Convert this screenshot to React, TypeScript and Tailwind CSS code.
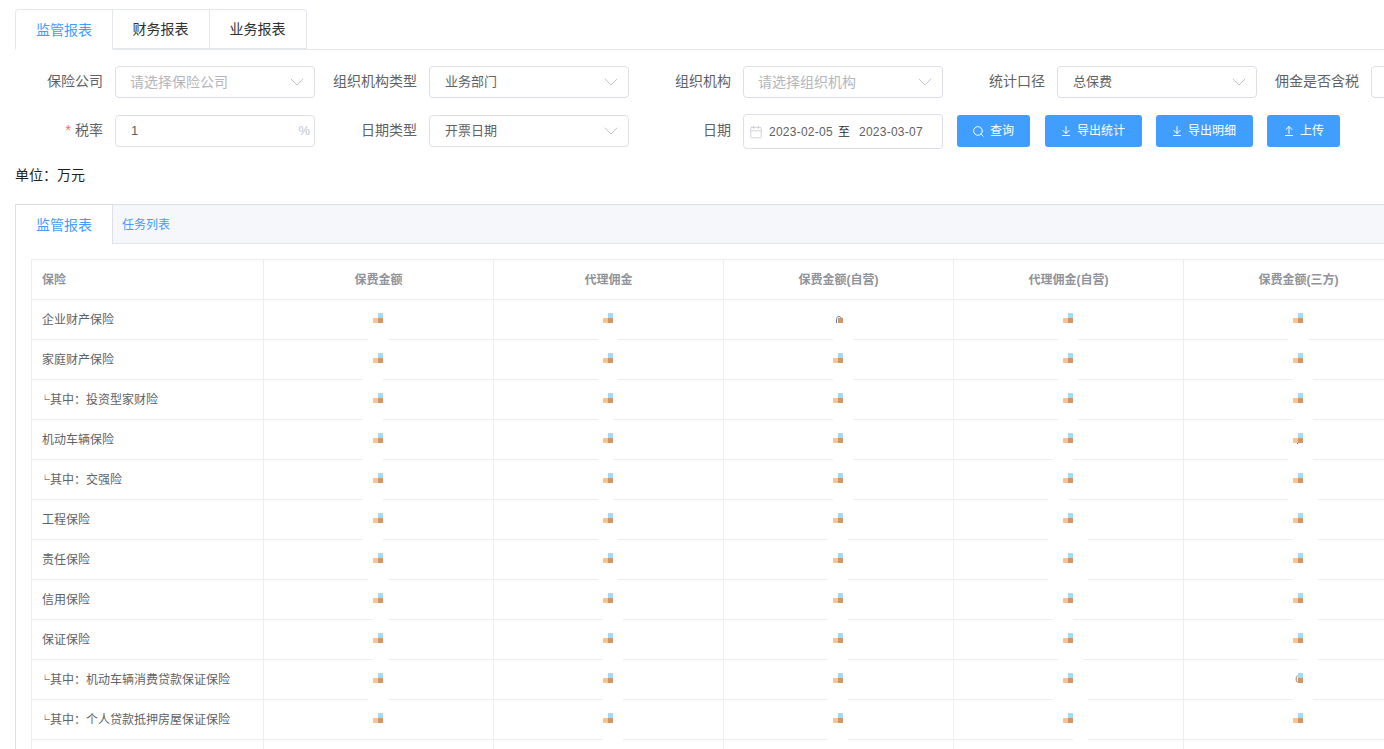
import { ArrowDownToLine, ArrowUpFromLine, Calendar, ChevronDown, Search } from "lucide-react";
import type { ReactNode } from "react";

const columns = ["保费金额", "代理佣金", "保费金额(自营)", "代理佣金(自营)", "保费金额(三方)"];

const rows = [
  "企业财产保险",
  "家庭财产保险",
  "└其中：投资型家财险",
  "机动车辆保险",
  "└其中：交强险",
  "工程保险",
  "责任保险",
  "信用保险",
  "保证保险",
  "└其中：机动车辆消费贷款保证保险",
  "└其中：个人贷款抵押房屋保证保险",
  "",
];

// where the values wipe out the row line, per column: [from, to] relative to the blob
const gaps: ([number, number] | null)[][] = [
  [[-5, 15], [-10, 10], [-10, 10], [-10, 10], [-10, 10], [-10, 10], [-5, 15], [0, 15], [0, 15], [-5, 15], null],
  [[-5, 15], [-5, 15], [-5, 10], [-5, 10], [-5, 10], [-5, 15], [-5, 15], [0, 20], [0, 20], [0, 20], [0, 20]],
  [[0, 20], [0, 20], [0, 20], [0, 20], [0, 20], [-5, 15], [-5, 15], [-5, 15], [-5, 15], [-5, 15], [-5, 15]],
  [[-5, 15], [-5, 15], [-5, 15], [-10, 10], [-15, 5], [-15, 25], [-15, 25], [-10, 10], [-5, 20], [-10, 25], [10, 25]],
  [[-5, 15], [0, 20], [0, 20], [-5, 20], [-5, 25], [0, 25], [0, 25], [0, 25], [5, 25], [0, 20], null],
];

const Blob = ({ variant }: { variant?: "lock" | "arc" | "dot" }) => (
  <svg viewBox="0 0 10 10" width="10" height="10" className="block overflow-visible">
    {variant !== "lock" && <rect x="5" y="0" width="5" height="5" fill="#a3daf5" />}
    {variant !== "lock" && <rect x="0" y="5" width="5" height="5" fill={variant === "arc" ? "#ffffff" : "#f9c48f"} />}
    <rect x="5" y="5" width="5" height="5" fill="#cf9767" />
    {variant === "lock" && <path d="M3.5 10V7C3.5 4.5 4.5 3.5 6 3.5S8.2 4.5 8.2 5" fill="none" stroke="#5f7fa8" strokeWidth="1" />}
    {variant === "arc" && <path d="M4.5 2.5C2.6 4.5 2.6 7.5 4.5 9.5" fill="none" stroke="#b97a55" strokeWidth="1" />}
    {variant === "dot" && <rect x="4" y="10" width="1" height="1" fill="#9a5a30" />}
  </svg>
);

const Field = ({ label, required, children }: { label: string; required?: boolean; children: ReactNode }) => (
  <div className="mr-[14px] flex w-[300px] shrink-0">
    <label className="h-8 w-[100px] shrink-0 pr-3 text-right text-sm leading-[31px] text-[#606266]">
      {required && <span className="mr-1 text-[#f56c6c]">*</span>}
      {label}
    </label>
    {children}
  </div>
);

const Select = ({ value, placeholder }: { value?: string; placeholder?: string }) => (
  <div className="flex h-8 w-[200px] shrink-0 items-center justify-between rounded border border-[#dcdfe6] bg-white pr-[5px]">
    {value ? (
      <span className="pl-[15px] text-[13px] text-[#606266]">{value}</span>
    ) : (
      <span className="pl-[14px] text-sm text-[#b3b6bc]">{placeholder}</span>
    )}
    <ChevronDown size={24} strokeWidth={1} className="text-[#c0c4cc]" />
  </div>
);

const Btn = ({ icon, text, wide }: { icon: ReactNode; text: string; wide?: boolean }) => (
  <button className={`flex h-8 shrink-0 items-center justify-center gap-[5px] rounded-[3px] bg-[#409eff] text-xs text-white ${wide ? "w-[97px] pr-[2px]" : "w-[73px]"}`}>
    {icon}
    {text}
  </button>
);

export default function App() {
  return (
    <div className="h-[749px] w-[1384px] overflow-hidden bg-white font-['Liberation_Sans','Noto_Sans_CJK_SC',sans-serif]">
      <div className="ml-[15px] mt-[9px] flex h-[41px] border-b border-[#e4e7ed] text-sm">
        <div className="-mb-px flex h-[41px] w-[98px] items-center justify-center rounded-tl border border-[#e4e7ed] border-b-white text-[#409eff]">监管报表</div>
        <div className="-ml-px flex h-10 w-[98px] items-center justify-center border-y border-r border-[#e4e7ed] text-[#303133]">财务报表</div>
        <div className="-ml-px flex h-10 w-[98px] items-center justify-center rounded-tr border-y border-r border-[#e4e7ed] text-[#303133]">业务报表</div>
      </div>

      <div className="ml-[15px] mt-4 flex">
        <Field label="保险公司"><Select placeholder="请选择保险公司" /></Field>
        <Field label="组织机构类型"><Select value="业务部门" /></Field>
        <Field label="组织机构"><Select placeholder="请选择组织机构" /></Field>
        <Field label="统计口径"><Select value="总保费" /></Field>
        <Field label="佣金是否含税"><Select /></Field>
      </div>

      <div className="ml-[15px] mt-[17px] flex">
        <Field label="税率" required>
          <div className="flex h-8 w-[200px] shrink-0 items-center justify-between rounded border border-[#dcdfe6] pl-[15px] pr-1 text-[13px]">
            <span className="text-[#606266]">1</span>
            <span className="text-[#c0c4cc]">%</span>
          </div>
        </Field>
        <Field label="日期类型"><Select value="开票日期" /></Field>
        <Field label="日期">
          <div className="-mt-px flex h-[35px] w-[200px] shrink-0 items-center rounded border border-[#dcdfe6] pl-[5px] text-xs text-[#606266]">
            <Calendar size={14} strokeWidth={1.25} className="mr-[6px] text-[#c0c4cc]" />
            <span className="w-[64px] tracking-[0.25px]">2023-02-05</span>
            <span className="ml-[5px] w-[21px] text-[#303133]">至</span>
            <span className="w-[64px] tracking-[0.25px]">2023-03-07</span>
          </div>
        </Field>
        <div className="flex gap-[14px]">
          <div className="mr-px">
            <Btn text="查询" icon={<Search size={13} strokeWidth={1.75} className="-ml-px" />} />
          </div>
          <Btn wide text="导出统计" icon={<ArrowDownToLine size={12} strokeWidth={2} />} />
          <Btn wide text="导出明细" icon={<ArrowDownToLine size={12} strokeWidth={2} />} />
          <Btn text="上传" icon={<ArrowUpFromLine size={12} strokeWidth={2} />} />
        </div>
      </div>

      <div className="ml-[15px] mt-4 text-sm leading-[20px] text-[#1f1f1f]">单位：万元</div>

      <div className="ml-[15px] mt-[19px] w-[1500px] border border-[#dcdfe6]">
        <div className="flex h-[39px] border-b border-[#e4e7ed] bg-[#f5f7fa]">
          <div className="-mb-px flex h-[39px] w-[97px] items-center justify-center border-r border-[#dcdfe6] bg-white text-sm text-[#409eff]">监管报表</div>
          <div className="flex items-center pl-[9px] pt-px text-xs text-[#409eff]">任务列表</div>
        </div>
        <div className="px-[15px] pt-[15px]">
          <table className="table-fixed border-separate border-spacing-0 border-l border-t border-[#ebeef5] text-xs">
            <thead>
              <tr>
                <th className="h-10 w-[232px] border-b border-r border-[#ebeef5] pl-[10px] pt-px text-left font-bold text-[#909399]">保险</th>
                {columns.map((c) => (
                  <th key={c} className="h-10 w-[230px] border-b border-r border-[#ebeef5] pt-px text-center font-bold text-[#909399]">{c}</th>
                ))}
              </tr>
            </thead>
            <tbody>
              {rows.map((name, r) => (
                <tr key={r}>
                  <td className="h-10 border-b border-r border-[#ebeef5] pl-[10px] pt-px text-[#606266]">
                    {name.startsWith("└") ? (
                      <>
                        <span className="-ml-[2px] inline-block w-[10px] font-['Noto_Sans_CJK_SC'] text-[10px] font-bold leading-none text-[#303133]">└</span>
                        {name.slice(1)}
                      </>
                    ) : (
                      name
                    )}
                  </td>
                  {columns.map((c, i) => {
                    const gap = gaps[i][r];
                    const variant = r === 0 && i === 2 ? "lock" : r === 9 && i === 4 ? "arc" : r === 3 && i === 4 ? "dot" : undefined;
                    return (
                      <td key={c} className="relative h-10 border-b border-r border-[#ebeef5]">
                        <div className="-mt-[3px] ml-[109px] w-[10px]">
                          <Blob variant={variant} />
                        </div>
                        {gap && (
                          <span
                            className="absolute -bottom-px h-px bg-white"
                            style={{ left: 109 + gap[0], width: gap[1] - gap[0] }}
                          />
                        )}
                      </td>
                    );
                  })}
                </tr>
              ))}
            </tbody>
          </table>
        </div>
      </div>
    </div>
  );
}
